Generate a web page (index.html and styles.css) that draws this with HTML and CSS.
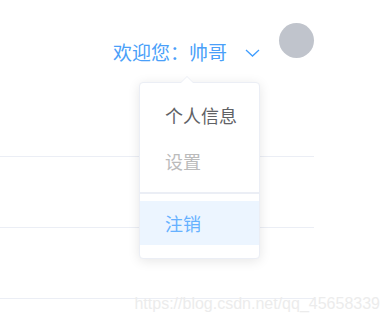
FILE: index.html
```html
<!DOCTYPE html>
<html lang="zh-CN">
<head>
    <meta charset="UTF-8">
    <meta name="viewport" content="width=device-width, initial-scale=1.0">
    <title>Header</title>
    <link rel="stylesheet" href="styles.css">
</head>
<body>
    <div class="page">
        <div class="header">
            <span class="welcome">欢迎您：帅哥
                <svg class="caret" width="15" height="8" viewBox="0 0 15 8">
                    <path d="M1 1 L7.5 7 L14 1" fill="none" stroke="#409eff" stroke-width="1.3"/>
                </svg>
            </span>
            <div class="avatar"></div>
        </div>

        <!-- table rows behind the menu -->
        <div class="row"></div>
        <div class="row"></div>
        <div class="row"></div>
    </div>

    <!-- user dropdown -->
    <ul class="dropdown">
        <li class="item">个人信息</li>
        <li class="item disabled">设置</li>
        <li class="item divided hover">注销</li>
    </ul>

    <div class="watermark">https://blog.csdn.net/qq_45658339</div>
</body>
</html>
```

FILE: styles.css
```css
body {
  margin: 0;
  background: #fff;
  font-family: "Noto Sans CJK SC", "Noto Sans", sans-serif;
}

.page {
  width: 314px;
}

.header {
  height: 86px;
  display: flex;
  justify-content: flex-end;
  align-items: flex-start;
}

.welcome {
  margin-top: 39px;
  font-size: 19px;
  line-height: 26px;
  color: #4a9ff9;
  display: flex;
  align-items: center;
}

.caret {
  margin-left: 18px;
  margin-top: 2px;
}

.avatar {
  width: 35px;
  height: 35px;
  margin-top: 23px;
  margin-left: 19px;
  border-radius: 50%;
  background-color: #c0c4cc;
}

.row {
  height: 70px;
  border-bottom: 1px solid #ebeef5;
}

.dropdown {
  position: absolute;
  top: 82px;
  left: 139px;
  width: 119px;
  margin: 0;
  padding: 9px 0 13px;
  list-style-type: none;
  background: #fff;
  border: 1px solid #ebeef5;
  border-radius: 4px;
  box-shadow: 0 2px 12px 0 rgba(0, 0, 0, 0.1);
}

.dropdown::before {
  content: "";
  position: absolute;
  top: -7px;
  left: 41px;
  border-width: 0 6px 6px;
  border-style: solid;
  border-color: transparent transparent #ebeef5;
}

.dropdown::after {
  content: "";
  position: absolute;
  top: -6px;
  left: 41px;
  border-width: 0 6px 6px;
  border-style: solid;
  border-color: transparent transparent #fff;
}

.item {
  height: 46px;
  line-height: 46px;
  padding-left: 25px;
  font-size: 18px;
  color: #606266;
}

.item.disabled {
  color: #bbb;
}

.item.divided {
  height: 44px;
  line-height: 44px;
  margin-top: 17px;
  position: relative;
}

.item.divided::before {
  content: "";
  position: absolute;
  left: 0;
  right: 0;
  top: -9px;
  height: 2px;
  background: #ebeef5;
}

.item.hover {
  background-color: #ecf5ff;
  color: #66b1ff;
}

.watermark {
  position: absolute;
  right: 9px;
  top: 295px;
  font-family: "Liberation Sans", Arial, sans-serif;
  font-size: 16px;
  color: #ececec;
}
```
